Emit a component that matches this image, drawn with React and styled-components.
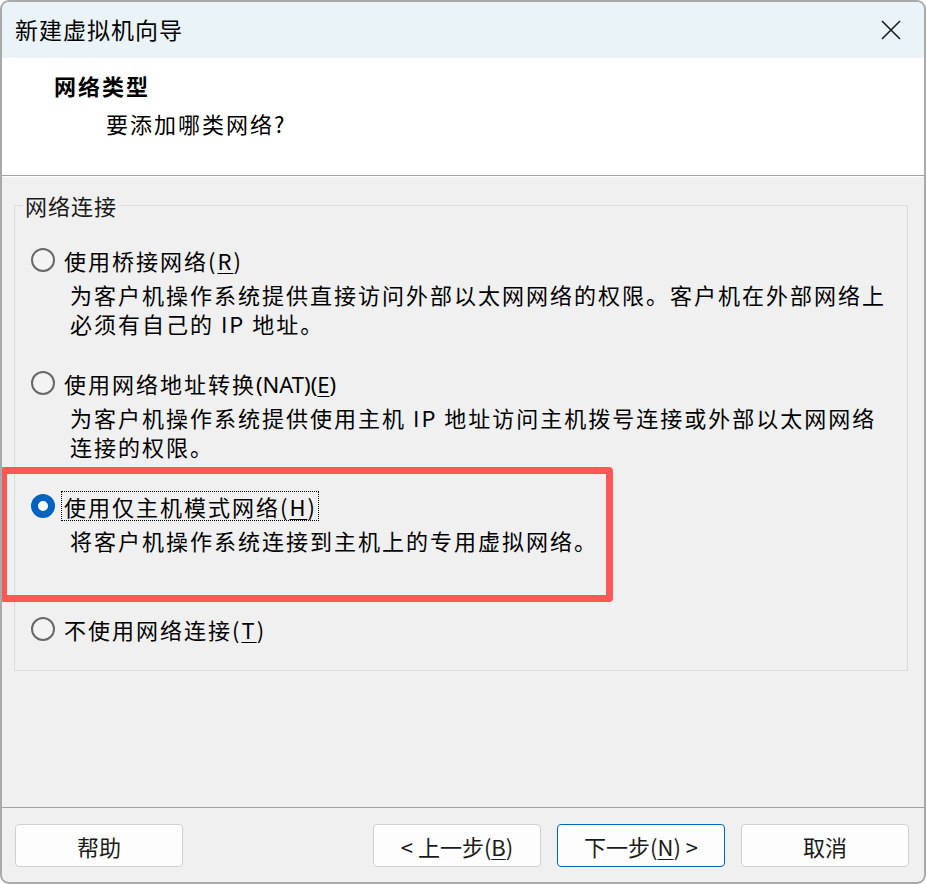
import React, { useState } from 'react';
import styled, { createGlobalStyle } from 'styled-components';

const GlobalStyle = createGlobalStyle`
  html, body {
    margin: 0;
    padding: 0;
    background: #ffffff;
  }
  body {
    font-family: "Noto Sans CJK SC", "Noto Sans", "Liberation Sans", sans-serif;
    color: #000;
  }
`;

const Window = styled.div`
  position: relative;
  width: 926px;
  height: 884px;
  box-sizing: border-box;
  border: 2px solid #a9a9a9;
  border-radius: 9px;
  overflow: hidden;
  background: #f0f0f0;
  display: flex;
  flex-direction: column;
`;

const TitleBar = styled.div`
  height: 56px;
  flex: none;
  display: flex;
  align-items: center;
  justify-content: space-between;
  padding: 0 23px 0 13px;
  background: #eaf3f7;
`;

const Title = styled.div`
  font-size: 23px;
  letter-spacing: 1px;
  line-height: 30px;
  margin-top: -3px;
`;

const CloseButton = styled.button`
  width: 20px;
  height: 20px;
  padding: 0;
  border: none;
  background: none;
  display: flex;
  color: #1a1a1a;
  cursor: pointer;
`;

const Header = styled.div`
  height: 118px;
  flex: none;
  box-sizing: border-box;
  background: #ffffff;
  border-bottom: 1px solid #a3a3a3;
  padding: 12px 0 0 52px;
`;

const HeaderTitle = styled.div`
  font-size: 22px;
  font-weight: bold;
  letter-spacing: 2px;
  line-height: 30px;
`;

const HeaderSub = styled.div`
  font-size: 22px;
  letter-spacing: 2px;
  line-height: 30px;
  margin: 8px 0 0 52px;
`;

const Main = styled.div`
  flex: 1;
  border-top: 1px solid #ffffff;
  padding: 13px 16px 0 12px;
`;

const GroupBox = styled.fieldset`
  margin: 0;
  border: 1px solid #dcdcdc;
  padding: 25px 16px 26px 16px;
  min-width: 0;
`;

const Legend = styled.legend`
  margin-left: -8px;
  padding: 0 2px;
  font-size: 22px;
  letter-spacing: 1px;
  line-height: 30px;
  color: #1a1a1a;
`;

const OptionList = styled.div`
  display: flex;
  flex-direction: column;
  gap: 30px;
`;

const OptionRow = styled.label`
  display: flex;
  align-items: center;
  height: 30px;
  cursor: pointer;
`;

const RadioCircle = styled.span`
  width: 24px;
  height: 24px;
  box-sizing: border-box;
  border-radius: 50%;
  flex: none;
  border: ${p => (p.checked ? '7px solid #0063c1' : '2px solid #686868')};
  background: ${p => (p.checked ? '#ffffff' : '#f3f3f3')};
  margin-right: 6px;
`;

const OptionText = styled.span`
  font-size: 22px;
  letter-spacing: 2px;
  line-height: 28px;
  padding: 0 1px 0 2px;
  border: 1px dotted ${p => (p.focused ? '#000000' : 'transparent')};
  white-space: nowrap;
`;

const Mnemonic = styled.span`
  text-decoration: underline;
  text-underline-offset: 3px;
  text-decoration-thickness: 1px;
`;

const Latin = styled.span`
  letter-spacing: 0;
  font-family: "Noto Sans", "Liberation Sans", sans-serif;
`;

const Description = styled.div`
  margin: 5px 0 0 39px;
  min-height: 58px;
  font-size: 22px;
  letter-spacing: 2px;
  line-height: 29px;
  white-space: nowrap;
`;

const Footer = styled.div`
  height: 75px;
  flex: none;
  box-sizing: border-box;
  border-top: 1px solid #a3a3a3;
  display: flex;
  justify-content: space-between;
  padding: 16px 15px 0 13px;
`;

const ButtonGroup = styled.div`
  display: flex;
  gap: 16px;
`;

const Button = styled.button`
  width: 168px;
  height: 43px;
  box-sizing: border-box;
  border-radius: 4px;
  border: 1px solid ${p => (p.primary ? '#0067c0' : '#d0d0d0')};
  background: #fdfdfd;
  font-family: "Noto Sans CJK SC", "Noto Sans", sans-serif;
  font-size: 22px;
  color: #1a1a1a;
  padding: 0;
  cursor: pointer;
`;

const Annotation = styled.div`
  position: absolute;
  left: -2px;
  top: 465px;
  width: 613px;
  height: 135px;
  box-sizing: border-box;
  border: 7px solid #ff5656;
  border-radius: 4px;
  pointer-events: none;
`;

const CloseIcon = () => (
  <svg width="20" height="20" viewBox="0 0 20 20" fill="none">
    <path d="M1 1 L19 19 M19 1 L1 19" stroke="currentColor" strokeWidth="1.6" />
  </svg>
);

const options = [
  {
    id: 'bridge',
    label: <>使用桥接网络(<Mnemonic>R</Mnemonic>)</>,
    lines: ['为客户机操作系统提供直接访问外部以太网网络的权限。客户机在外部网络上', '必须有自己的 IP 地址。'],
  },
  {
    id: 'nat',
    label: <>使用网络地址转换<Latin>(NAT)(<Mnemonic>E</Mnemonic>)</Latin></>,
    lines: ['为客户机操作系统提供使用主机 IP 地址访问主机拨号连接或外部以太网网络', '连接的权限。'],
  },
  {
    id: 'hostonly',
    label: <>使用仅主机模式网络(<Mnemonic>H</Mnemonic>)</>,
    lines: ['将客户机操作系统连接到主机上的专用虚拟网络。'],
  },
  {
    id: 'none',
    label: <>不使用网络连接(<Mnemonic>T</Mnemonic>)</>,
    lines: null,
  },
];

export default function App() {
  const [selected, setSelected] = useState('hostonly');

  return (
    <>
      <GlobalStyle />
      <Window>
        <TitleBar>
          <Title>新建虚拟机向导</Title>
          <CloseButton aria-label="关闭"><CloseIcon /></CloseButton>
        </TitleBar>

        <Header>
          <HeaderTitle>网络类型</HeaderTitle>
          <HeaderSub>要添加哪类网络?</HeaderSub>
        </Header>

        <Main>
          <GroupBox>
            <Legend>网络连接</Legend>
            <OptionList>
              {options.map(opt => (
                <div key={opt.id}>
                  <OptionRow onClick={() => setSelected(opt.id)}>
                    <RadioCircle checked={selected === opt.id} />
                    <OptionText focused={selected === opt.id}>{opt.label}</OptionText>
                  </OptionRow>
                  {opt.lines && (
                    <Description>
                      {opt.lines.map((line, i) => (
                        <div key={i}>{line}</div>
                      ))}
                    </Description>
                  )}
                </div>
              ))}
            </OptionList>
          </GroupBox>
        </Main>

        <Footer>
          <Button>帮助</Button>
          <ButtonGroup>
            <Button>&lt; 上一步(<Mnemonic>B</Mnemonic>)</Button>
            <Button primary>下一步(<Mnemonic>N</Mnemonic>) &gt;</Button>
            <Button>取消</Button>
          </ButtonGroup>
        </Footer>

        <Annotation />
      </Window>
    </>
  );
}
